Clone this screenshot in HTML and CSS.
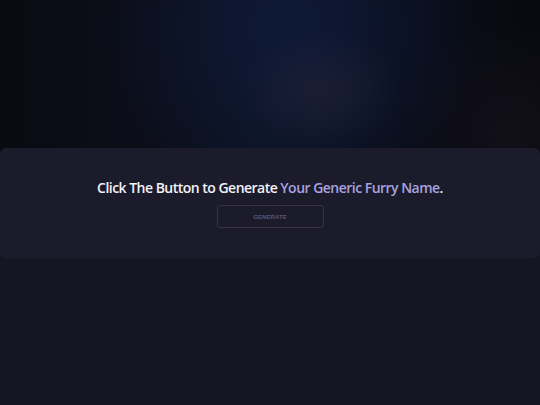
FILE: index.html
```html
<!DOCTYPE html>
<html lang="en">
<head>
<meta charset="utf-8">
<title>Generic Furry Name Generator</title>
<link rel="stylesheet" href="styles.css">
</head>
<body>
<div class="hero"></div>
<main class="card">
  <h1 class="prompt">Click The Button to Generate <span class="accent">Your Generic Furry Name</span>.</h1>
  <button class="generate" type="button">GENERATE</button>
</main>
</body>
</html>
```

FILE: styles.css
```css
html, body {
  margin: 0;
  padding: 0;
}
body {
  background: #161524;
  font-family: "Open Sans", "Noto Sans", sans-serif;
  color: #ffffff;
  height: 405px;
  overflow: hidden;
}
.hero {
  height: 154px;
  background:
    radial-gradient(ellipse 80px 60px at 320px 90px, rgba(30,32,54,0.8), rgba(30,32,54,0) 100%),
    radial-gradient(ellipse 190px 180px at 290px 30px, rgba(14,26,58,0.9), rgba(14,26,58,0) 100%),
    radial-gradient(ellipse 110px 110px at 510px 130px, rgba(20,16,26,0.8), rgba(20,16,26,0) 100%),
    linear-gradient(90deg, #0a0a12 0%, #0c0e1a 30%, #0d1322 50%, #0a0d19 75%, #08090f 100%);
}
.card {
  margin-top: -6px;
  height: 110px;
  background: #1c1b2b;
  border-radius: 6px;
  display: flex;
  flex-direction: column;
  align-items: center;
  padding-top: 30px;
  box-sizing: border-box;
}
.prompt {
  margin: 0;
  font-size: 14px;
  font-weight: 600;
  line-height: 20px;
  color: #f2f2f6;
  letter-spacing: -0.52px;
}
.accent {
  color: #a8a3df;
}
.generate {
  margin-top: 7px;
  width: 107px;
  height: 23px;
  background: transparent;
  border: 1.5px solid #363149;
  border-radius: 3px;
  color: #5c5773;
  font-family: "Liberation Sans", Arial, sans-serif;
  font-size: 6px;
  font-weight: 700;
  letter-spacing: 0.1px;
  padding: 0;
}
```
